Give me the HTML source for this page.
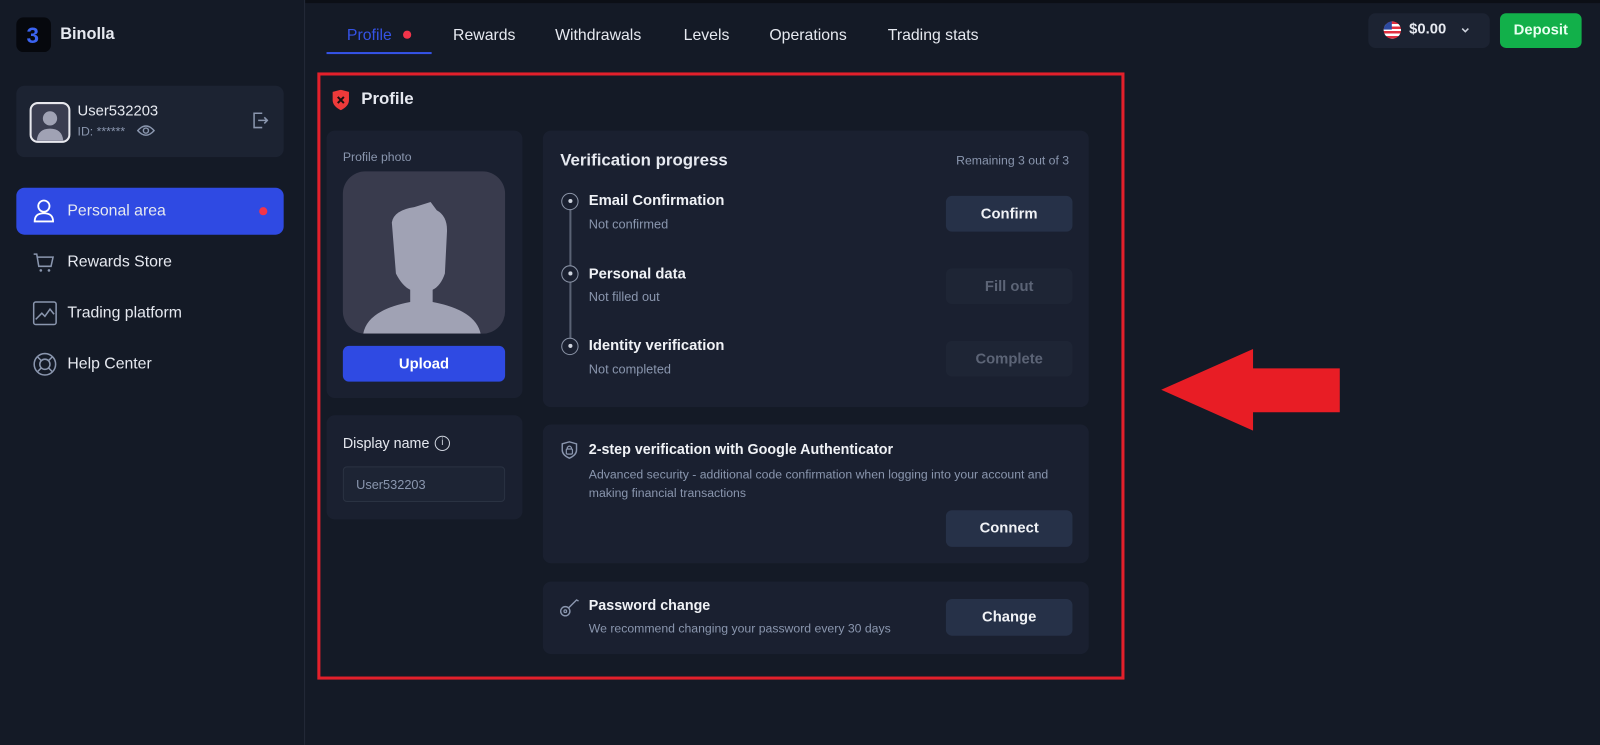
<!DOCTYPE html>
<html><head><meta charset="utf-8"><style>
*{box-sizing:border-box;margin:0;padding:0}
body{width:1600px;height:730px;overflow:hidden;background:#141a26;font-family:"Liberation Sans",sans-serif;color:#e6e9f0;position:relative}
#w{position:absolute;left:0;top:0;width:1568px;height:716px;transform:scale(1.0204);transform-origin:0 0}
.abs{position:absolute}
.side{left:0;top:0;width:299px;height:730px;border-right:1px solid #232a38;background:#141a26}
.card{background:#1a2030;border-radius:8px;position:absolute}
.btn{position:absolute;border-radius:6px;display:flex;align-items:center;justify-content:center;font-weight:bold;font-size:14.5px}
.nav{position:absolute;left:16px;width:262px;height:46px;display:flex;align-items:center;font-size:15.5px;color:#e6e9f0}
.nav svg{position:absolute;left:16px}
.nav span{position:absolute;left:50px}
.tab{position:absolute;top:26px;font-size:15.5px;color:#e6e9f0}
.t1{font-size:14.5px;font-weight:bold;color:#f0f2f6}
.t2{font-size:12.5px;color:#8a96ae}
</style></head><body><div id="w">
<div class="abs" style="left:0;top:0;width:1600px;height:3px;background:#0c0f16"></div>
<div class="abs side"></div>
<div class="abs" style="left:16px;top:17px;width:34px;height:34px;background:#06080d;border-radius:7px"></div>
<div class="abs" style="left:26px;top:22px;font-size:22px;font-weight:bold;color:#3b63f0">3</div>
<div class="abs" style="left:59px;top:25px;font-size:16px;font-weight:bold">Binolla</div>
<div class="card" style="left:16px;top:84px;width:262px;height:70px;background:#1c2332"></div>
<div class="abs" style="left:29px;top:100px;width:40px;height:40px;border:2px solid #e8e8ee;border-radius:8px;background:#3a3d50;overflow:hidden">
<svg width="36" height="36" viewBox="0 0 36 36"><circle cx="18" cy="14" r="7" fill="#a0a2b4"/><path d="M5 36 Q6 24 18 24 Q30 24 31 36Z" fill="#a0a2b4"/></svg></div>
<div class="abs" style="left:76px;top:101px;font-size:14.5px">User532203</div>
<div class="abs" style="left:76px;top:122px;font-size:12px;color:#8a96ae">ID: ******</div>
<svg class="abs" style="left:134px;top:121px" width="18" height="14" viewBox="0 0 18 14"><path d="M1 7 Q9 -2 17 7 Q9 16 1 7Z" fill="none" stroke="#8a96ae" stroke-width="1.4"/><circle cx="9" cy="7" r="2.5" fill="none" stroke="#8a96ae" stroke-width="1.4"/></svg>
<svg class="abs" style="left:247px;top:109px" width="16" height="18" viewBox="0 0 16 18"><path d="M10 2H2V16H10M6 9H15M12 6L15 9L12 12" fill="none" stroke="#8a96ae" stroke-width="1.5"/></svg>
<div class="nav" style="top:184px;background:#2f4ae3;border-radius:8px"><svg width="22" height="24" viewBox="0 0 22 24"><circle cx="11" cy="7" r="5.5" fill="none" stroke="#fff" stroke-width="1.8"/><path d="M2 22 Q2 14 11 14 Q20 14 20 22Z" fill="none" stroke="#fff" stroke-width="1.8"/></svg><span>Personal area</span><div class="abs" style="left:238px;top:19px;width:8px;height:8px;border-radius:50%;background:#f2344a"></div></div>
<div class="nav" style="top:234px"><svg width="22" height="22" viewBox="0 0 22 22"><path d="M1 3H4L6 15H18L20 6H5" fill="none" stroke="#8a96ae" stroke-width="1.5"/><circle cx="8" cy="19" r="1.3" fill="#8a96ae"/><circle cx="16" cy="19" r="1.3" fill="#8a96ae"/></svg><span>Rewards Store</span></div>
<div class="nav" style="top:284px"><svg width="24" height="24" viewBox="0 0 24 24"><rect x="1" y="1" width="22" height="22" rx="2" fill="none" stroke="#8a96ae" stroke-width="1.5"/><path d="M3 18L9 12L12 15L17 8L21 13" fill="none" stroke="#8a96ae" stroke-width="1.5"/></svg><span>Trading platform</span></div>
<div class="nav" style="top:334px"><svg width="24" height="24" viewBox="0 0 24 24"><circle cx="12" cy="12" r="10.5" fill="none" stroke="#8a96ae" stroke-width="1.5"/><circle cx="12" cy="12" r="5" fill="none" stroke="#8a96ae" stroke-width="1.5"/><path d="M5 5L8.5 8.5M19 5L15.5 8.5M5 19L8.5 15.5M19 19L15.5 15.5" stroke="#8a96ae" stroke-width="1.5"/></svg><span>Help Center</span></div>
<div class="tab" style="left:340px;color:#3553e6">Profile</div>
<div class="abs" style="left:395px;top:30px;width:8px;height:8px;border-radius:50%;background:#f2344a"></div>
<div class="abs" style="left:320px;top:51px;width:103px;height:2px;background:#3553e6"></div>
<div class="tab" style="left:444px">Rewards</div>
<div class="tab" style="left:544px">Withdrawals</div>
<div class="tab" style="left:670px">Levels</div>
<div class="tab" style="left:754px">Operations</div>
<div class="tab" style="left:870px">Trading stats</div>
<div class="abs" style="left:1341px;top:13px;width:119px;height:34px;background:#1c2332;border-radius:7px"></div>
<div class="abs" style="left:1356px;top:21px;width:17px;height:17px;border-radius:50%;background:repeating-linear-gradient(#e03040 0 2.4px,#fff 2.4px 4.8px);overflow:hidden"><div style="width:8px;height:8px;background:#2c4aa0"></div></div>
<div class="abs" style="left:1381px;top:21px;font-size:14.5px;font-weight:bold">$0.00</div>
<svg class="abs" style="left:1431px;top:26px" width="10" height="7" viewBox="0 0 10 7"><path d="M2 2L5 5L8 2" fill="none" stroke="#cfd4de" stroke-width="1.5"/></svg>
<div class="btn" style="left:1470px;top:13px;width:80px;height:34px;background:#12b04a;color:#e8fff0">Deposit</div>
<div class="abs" style="left:311px;top:71px;width:791px;height:595px;border:3px solid #e3202b"></div>
<svg class="abs" style="left:325px;top:88px" width="18" height="20" viewBox="0 0 18 20"><path d="M1 2L9 0L17 2V10Q17 16 9 20Q1 16 1 10Z" fill="#ee3a3a"/><path d="M6 7L12 13M12 7L6 13" stroke="#1a1010" stroke-width="2"/></svg>
<div class="abs" style="left:354px;top:88px;font-size:16.5px;font-weight:bold">Profile</div>
<div class="card" style="left:320px;top:128px;width:192px;height:262px"></div>
<div class="abs t2" style="left:336px;top:147px;font-size:12px">Profile photo</div>
<div class="abs" style="left:336px;top:168px;width:159px;height:159px;border-radius:22px;background:#393b4d;overflow:hidden">
<svg width="159" height="159" viewBox="0 0 159 159"><path d="M48 50Q50 38 70 35L86 30L92 38Q103 44 102 60L100 100Q96 112 88 116V128Q130 136 135 159H20Q24 136 66 128V116Q58 112 52 100Z" fill="#a0a2b4"/></svg></div>
<div class="btn" style="left:336px;top:339px;width:159px;height:35px;background:#2f4ae3;color:#fff">Upload</div>
<div class="card" style="left:320px;top:407px;width:192px;height:102px"></div>
<div class="abs" style="left:336px;top:426px;font-size:14px">Display name</div>
<div class="abs" style="left:426px;top:427px;width:15px;height:15px;border:1.4px solid #cfd4de;border-radius:50%;font-size:10px;text-align:center;line-height:12px;color:#cfd4de">i</div>
<div class="abs" style="left:336px;top:457px;width:159px;height:35px;border:1px solid #2a3242;border-radius:4px;background:#1d2434;font-size:12.5px;color:#8a96ae;padding:10px 0 0 12px">User532203</div>
<div class="card" style="left:532px;top:128px;width:535px;height:271px"></div>
<div class="abs" style="left:549px;top:148px;font-size:16.5px;font-weight:bold">Verification progress</div>
<div class="abs t2" style="left:937px;top:150px;font-size:12px">Remaining 3 out of 3</div>
<div class="abs" style="left:558px;top:205px;width:2px;height:128px;background:#5a6274"></div>
<div class="abs" style="left:550px;top:189px;width:17px;height:17px;border:1.5px solid #8a93a6;border-radius:50%;background:#1a2030"><div style="margin:5px auto;width:4px;height:4px;border-radius:50%;background:#cfd4de"></div></div>
<div class="abs" style="left:550px;top:260px;width:17px;height:17px;border:1.5px solid #8a93a6;border-radius:50%;background:#1a2030"><div style="margin:5px auto;width:4px;height:4px;border-radius:50%;background:#cfd4de"></div></div>
<div class="abs" style="left:550px;top:331px;width:17px;height:17px;border:1.5px solid #8a93a6;border-radius:50%;background:#1a2030"><div style="margin:5px auto;width:4px;height:4px;border-radius:50%;background:#cfd4de"></div></div>
<div class="abs t1" style="left:577px;top:189px">Email Confirmation</div>
<div class="abs t2" style="left:577px;top:213px">Not confirmed</div>
<div class="abs t1" style="left:577px;top:261px">Personal data</div>
<div class="abs t2" style="left:577px;top:284px">Not filled out</div>
<div class="abs t1" style="left:577px;top:331px">Identity verification</div>
<div class="abs t2" style="left:577px;top:355px">Not completed</div>
<div class="btn" style="left:927px;top:192px;width:124px;height:35px;background:#263148;color:#f0f2f6">Confirm</div>
<div class="btn" style="left:927px;top:263px;width:124px;height:35px;background:#1e2535;color:#5c6476">Fill out</div>
<div class="btn" style="left:927px;top:334px;width:124px;height:35px;background:#1e2535;color:#5c6476">Complete</div>
<div class="card" style="left:532px;top:416px;width:535px;height:136px"></div>
<svg class="abs" style="left:550px;top:432px" width="16" height="18" viewBox="0 0 16 18"><path d="M1 3L8 1L15 3V9Q15 14 8 17Q1 14 1 9Z" fill="none" stroke="#8a96ae" stroke-width="1.4"/><rect x="5" y="8" width="6" height="5" rx="1" fill="none" stroke="#8a96ae" stroke-width="1.2"/><path d="M6 8V6.5Q8 4 10 6.5V8" fill="none" stroke="#8a96ae" stroke-width="1.2"/></svg>
<div class="abs t1" style="left:577px;top:432px;font-size:14px">2-step verification with Google Authenticator</div>
<div class="abs t2" style="left:577px;top:456px;font-size:12px;line-height:18px;width:480px">Advanced security - additional code confirmation when logging into your account and making financial transactions</div>
<div class="btn" style="left:927px;top:500px;width:124px;height:36px;background:#263148;color:#f0f2f6">Connect</div>
<div class="card" style="left:532px;top:570px;width:535px;height:71px"></div>
<svg class="abs" style="left:548px;top:585px" width="20" height="20" viewBox="0 0 20 20"><circle cx="6" cy="14" r="4.5" fill="none" stroke="#8a96ae" stroke-width="1.4"/><circle cx="6" cy="14" r="1.3" fill="none" stroke="#8a96ae" stroke-width="1.2"/><path d="M9 11L17 3L19 4" fill="none" stroke="#8a96ae" stroke-width="1.4"/></svg>
<div class="abs t1" style="left:577px;top:585px;font-size:14px">Password change</div>
<div class="abs t2" style="left:577px;top:609px;font-size:12px">We recommend changing your password every 30 days</div>
<div class="btn" style="left:927px;top:587px;width:124px;height:36px;background:#263148;color:#f0f2f6">Change</div>
<svg class="abs" style="left:1130px;top:335px" width="190" height="95" viewBox="1130 335 190 95"><polygon points="1138,382 1228,342 1228,361 1313,361 1313,404 1228,404 1228,422" fill="#e81d25"/></svg>
</div></body></html>
